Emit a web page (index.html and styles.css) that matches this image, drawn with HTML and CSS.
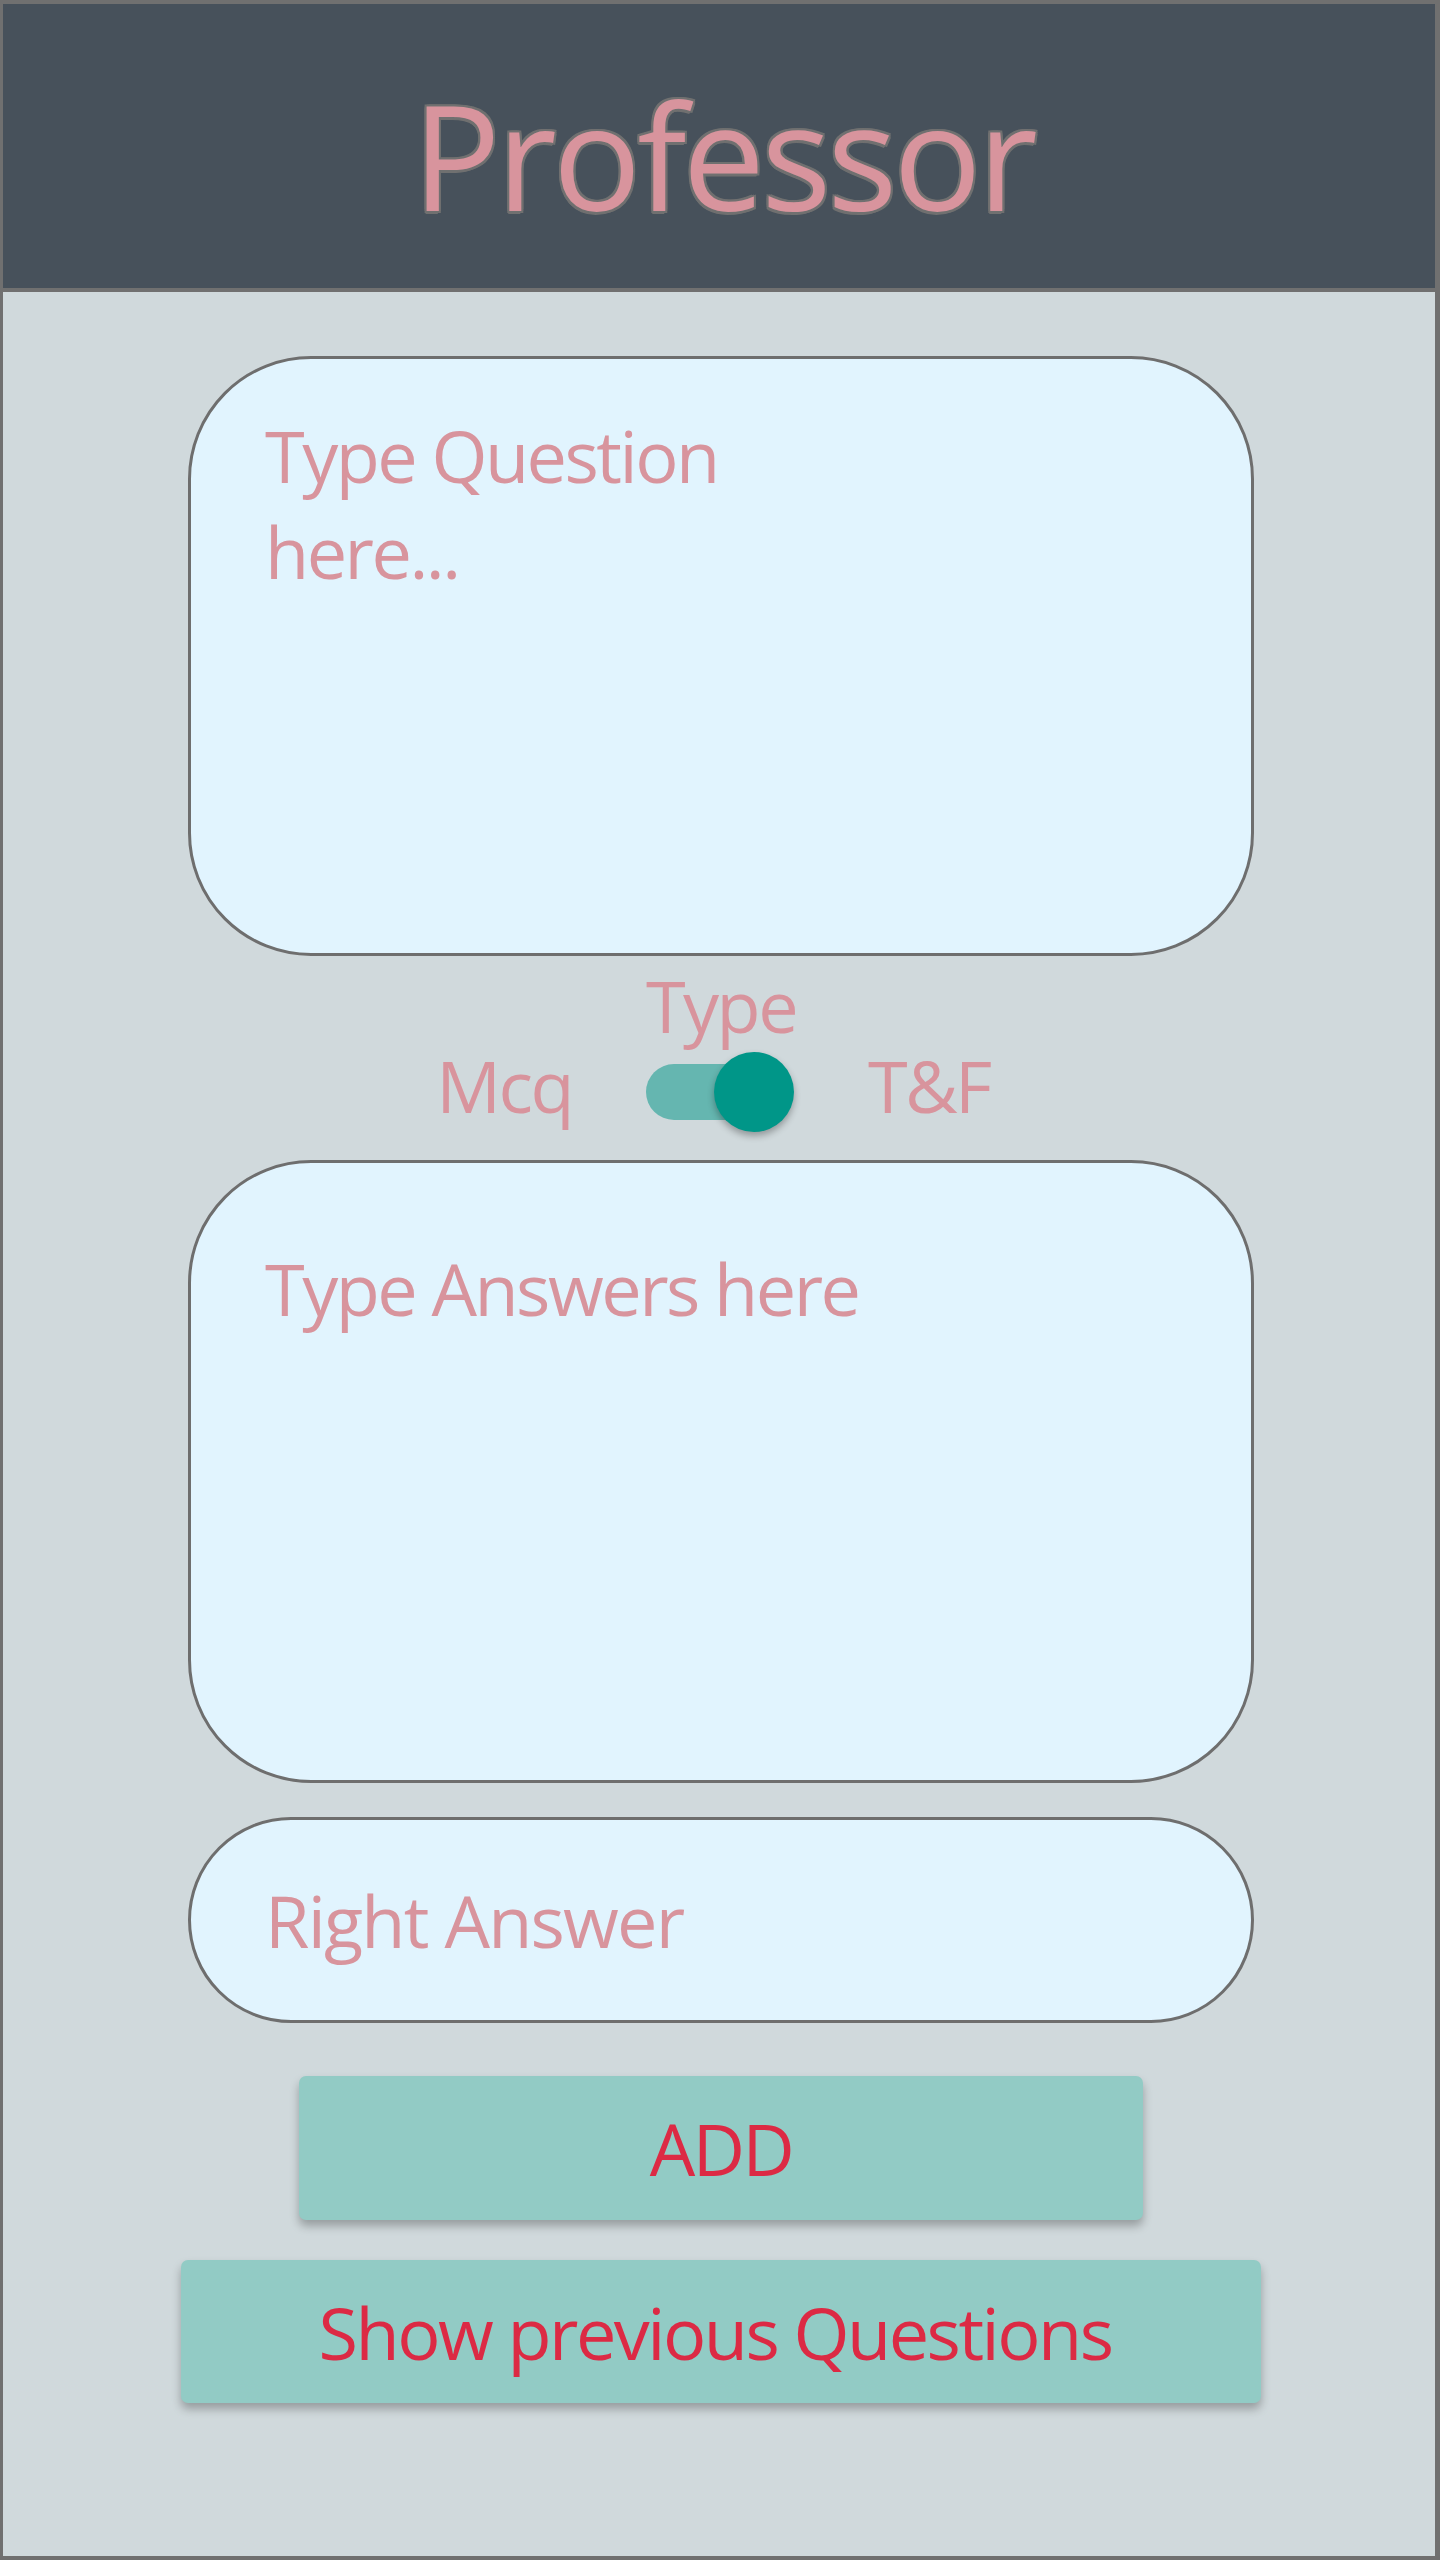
FILE: index.html
```html
<!DOCTYPE html>
<html lang="en">
<head>
<meta charset="utf-8">
<title>Professor</title>
<link rel="stylesheet" href="styles.css">
</head>
<body>
<div class="frame">
  <header class="topbar">
    <h1 class="title">Professor</h1>
  </header>
  <main class="content">
    <div class="field field-question">
      <span class="placeholder placeholder-question">Type Question here...</span>
    </div>
    <div class="type-label">Type</div>
    <div class="type-row">
      <span class="opt">Mcq</span>
      <span class="switch">
        <span class="track"></span>
        <span class="thumb"></span>
      </span>
      <span class="opt">T&amp;F</span>
    </div>
    <div class="field field-answers">
      <span class="placeholder">Type Answers here</span>
    </div>
    <div class="field field-right">
      <span class="placeholder placeholder-right">Right Answer</span>
    </div>
    <button class="btn btn-add">ADD</button>
    <button class="btn btn-show">Show previous Questions</button>
  </main>
</div>
</body>
</html>
```

FILE: styles.css
```css
* { box-sizing: border-box; }
html, body { margin: 0; padding: 0; }
body {
  width: 1440px;
  height: 2560px;
  font-family: "Open Sans", "Noto Sans", "Liberation Sans", sans-serif;
  background: #d0d9dc;
}
.frame {
  width: 1440px;
  height: 2560px;
  border-style: solid;
  border-color: #707070;
  border-width: 4px 5px 4px 3px;
  background: #d0d9dc;
  display: flex;
  flex-direction: column;
}
.topbar {
  height: 288px;
  background: #47515b;
  border-bottom: 4px solid #707070;
  display: flex;
  align-items: center;
  justify-content: center;
  padding-top: 16px;
  padding-left: 8px;
  flex: none;
}
.title {
  margin: 0;
  font-weight: 400;
  font-size: 147px;
  letter-spacing: -4px;
  line-height: normal;
  color: #d8949d;
  text-shadow:
    -2px 0 0 #707070, 2px 0 0 #707070, 0 -2px 0 #707070, 0 2px 0 #707070,
    -2px -2px 0 #707070, 2px 2px 0 #707070, -2px 2px 0 #707070, 2px -2px 0 #707070,
    -1px 3px 0 #707070;
}
.content {
  display: flex;
  flex-direction: column;
  align-items: center;
  padding-top: 64px;
  padding-left: 4px;
  flex: 1;
}
.field {
  width: 1066px;
  background: #e1f4fe;
  border: 3px solid #6e6e6e;
  padding-left: 74px;
  font-size: 72px;
  line-height: 96px;
  letter-spacing: -2.5px;
  color: #d8949d;
  flex: none;
}
.field-question {
  height: 600px;
  border-radius: 123px;
  padding-top: 48px;
}
.placeholder-question {
  display: block;
  width: 520px;
}
.placeholder-right {
  letter-spacing: -1.8px;
}
.type-label {
  margin-top: 9px;
  font-size: 72px;
  line-height: 80px;
  letter-spacing: -2.5px;
  color: #d8949d;
}
.type-row {
  margin-top: 7px;
  height: 80px;
  display: flex;
  align-items: center;
  gap: 74px;
  padding-right: 16px;
}
.opt {
  font-size: 72px;
  line-height: 80px;
  letter-spacing: -2.5px;
  color: #d8949d;
  margin-bottom: 14px;
}
.switch {
  position: relative;
  width: 148px;
  height: 80px;
  display: block;
}
.track {
  position: absolute;
  left: 0;
  top: 12px;
  width: 136px;
  height: 56px;
  border-radius: 28px;
  background: #65b6b0;
}
.thumb {
  position: absolute;
  left: 68px;
  top: 0;
  width: 80px;
  height: 80px;
  border-radius: 50%;
  background: #009688;
  box-shadow: 0 4px 7px rgba(0, 0, 0, 0.3);
}
.field-answers {
  margin-top: 28px;
  height: 623px;
  border-radius: 123px;
  padding-top: 77px;
}
.field-right {
  margin-top: 34px;
  height: 206px;
  border-radius: 103px;
  display: flex;
  align-items: center;
}
.btn {
  border: none;
  border-radius: 7px;
  background: #92cbc5;
  color: #dc2a44;
  font-family: "Open Sans", "Noto Sans", "Liberation Sans", sans-serif;
  font-size: 72px;
  line-height: 96px;
  letter-spacing: -2.5px;
  box-shadow: 0 6px 10px rgba(0, 0, 0, 0.28);
  padding: 0;
  flex: none;
}
.btn-add {
  margin-top: 53px;
  width: 844px;
  height: 144px;
}
.btn-show {
  margin-top: 40px;
  width: 1080px;
  height: 143px;
  padding-right: 12px;
}
```
